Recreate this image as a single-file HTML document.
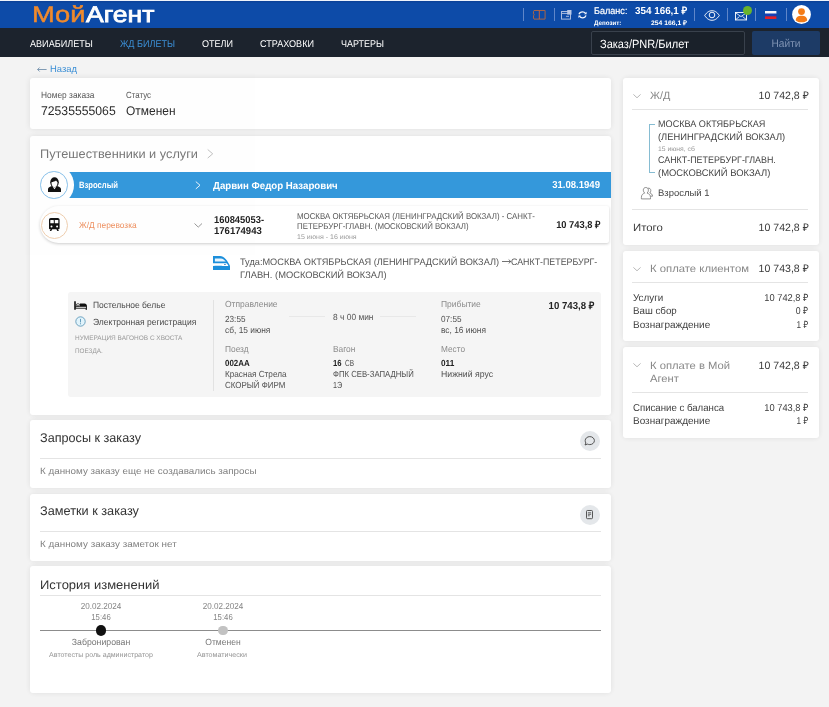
<!DOCTYPE html>
<html lang="ru">
<head>
<meta charset="utf-8">
<title>Мой Агент</title>
<style>
*{box-sizing:border-box;margin:0;padding:0}
html,body{width:829px;height:707px;overflow:hidden}
body{background:#f3f3f3;font-family:"Liberation Sans",sans-serif;color:#333;position:relative;font-size:10px}
.a{position:absolute;white-space:pre;line-height:1;text-rendering:geometricPrecision}
.card{position:absolute;background:#fff;border-radius:3px;box-shadow:0 0 6px rgba(0,0,0,.09)}
.hr{position:absolute;height:1px;background:#e4e4e4}
#top{position:absolute;left:0;top:0;width:829px;height:28.3px;background:#0d4ba8}
#top:before{content:"";position:absolute;left:0;top:0;width:100%;height:3px;background:linear-gradient(#eef3fb 0 1px,#0b429a 1px 2.300px,#0c47a0 2.300px)}
#nav{position:absolute;left:0;top:28.3px;width:829px;height:29.2px;background:#1c232d}
.sep{position:absolute;top:8px;width:1px;height:13px;background:#5f86c9}
.ic{position:absolute;overflow:visible}
#pg{position:absolute;left:0;top:0;width:829px;height:707px;will-change:opacity;opacity:.999}
</style>
</head>
<body>
<div id="pg">
<!-- ===== top bar ===== -->
<div id="top">
  <div class="sep" style="left:523px"></div>
  <svg class="ic" style="left:533px;top:10.400px" width="12.600" height="9.600" viewBox="0 0 12.600 9.600"><path d="M1 .500h11.100v8.600H1L.500 8V5.800l.700-1-.700-1V1.600z" fill="none" stroke="#c26a3a" stroke-width=".85"/><path d="M6.300.600v8.400" stroke="#e2622c" stroke-width=".9"/></svg>
  <div class="sep" style="left:553.5px"></div>
  <svg class="ic" style="left:561px;top:9.700px" width="11" height="10" viewBox="0 0 11 10"><rect x=".5" y="1.500" width="9" height="7.600" fill="none" stroke="#a9bbdf" stroke-width="1"/><path d="M.500 3.400h9" stroke="#a9bbdf" stroke-width="1"/><rect x="6.200" y="0" width="4.300" height="4.600" fill="#b9c8e6"/><path d="M5 6.300h3" stroke="#a9bbdf" stroke-width="1"/></svg>
  <svg class="ic" style="left:578.200px;top:10.800px" width="9" height="7.600" viewBox="0 0 9 7.600"><path d="M1 3.200C1.500 1.600 2.900.800 4.500.800c1.300 0 2.400.600 3.100 1.600M8 4.400C7.500 6 6.100 6.800 4.500 6.800c-1.300 0-2.400-.600-3.100-1.600" fill="none" stroke="#f2f6fd" stroke-width="1.250"/><path d="M8.600.700v2.500H6.100zM.400 6.900V4.400h2.500z" fill="#f2f6fd"/></svg>
  <div class="sep" style="left:694px"></div>
  <svg class="ic" style="left:703.5px;top:9.6px" width="16" height="11" viewBox="0 0 16 11"><path d="M.7 5.500C3 1.800 5.700.700 8 .700s5 1.100 7.300 4.800C13 9.200 10.300 10.300 8 10.300S3 9.200.700 5.500z" fill="none" stroke="#fff" stroke-width=".95"/><circle cx="8" cy="5" r="2.800" fill="none" stroke="#fff" stroke-width=".95"/></svg>
  <div class="sep" style="left:726.5px"></div>
  <svg class="ic" style="left:734.6px;top:11.8px" width="12" height="8.400" viewBox="0 0 12 8.400"><rect x=".45" y=".45" width="11.100" height="7.500" fill="none" stroke="#fff" stroke-width=".9"/><path d="M.500.700l5.500 3.900 5.500-3.900M.500 7.800l4-3.300M11.500 7.800l-4-3.300" fill="none" stroke="#fff" stroke-width=".8"/></svg>
  <div class="a" style="left:743.400px;top:5.700px;width:9px;height:9px;border-radius:50%;background:#69b32c"></div>
  <div class="sep" style="left:755px"></div>
  <svg class="ic" style="left:764.800px;top:10.500px" width="11.400" height="8" viewBox="0 0 11.400 8"><rect width="11.400" height="2.700" fill="#f6f6fa"/><rect y="2.700" width="11.400" height="2.650" fill="#1a3fb5"/><rect y="5.350" width="11.400" height="2.650" fill="#e0202a"/></svg>
  <div class="sep" style="left:786px"></div>
  <svg class="ic" style="left:792.300px;top:5px" width="19" height="19" viewBox="0 0 19 19"><circle cx="9.500" cy="9.500" r="9.400" fill="#fff"/><circle cx="9.500" cy="6.600" r="3.400" fill="#f47b16"/><path d="M3.800 15.400c0-3.300 2.500-4.600 5.700-4.600s5.700 1.300 5.700 4.600c-1.500 1.300-3.400 1.800-5.700 1.800s-4.200-.500-5.700-1.800z" fill="#f47b16"/></svg>
</div>
<div id="nav"></div>
<div class="a" style="left:591px;top:31px;width:154px;height:24px;background:#1a212a;border:1px solid #39414c;border-radius:2px"></div>
<div class="a" style="left:752.400px;top:31px;width:67.400px;height:23.600px;background:#1d3b66;border-radius:2px"></div>
<svg class="ic" style="left:37.200px;top:66.500px" width="10" height="5" viewBox="0 0 10 5"><path d="M.600 2.500h9M2.600.500L.600 2.500l2 2" fill="none" stroke="#7391ad" stroke-width=".9"/></svg>

<!-- ===== cards ===== -->
<div class="card" style="left:29.700px;top:78px;width:581.600px;height:51.400px"></div>
<div class="card" style="left:29.700px;top:135.500px;width:581.600px;height:279px"></div>
<div class="card" style="left:29.700px;top:420px;width:581.600px;height:68px"></div>
<div class="card" style="left:29.700px;top:493.800px;width:581.600px;height:67.300px"></div>
<div class="card" style="left:29.700px;top:566.300px;width:581.600px;height:126.400px"></div>
<div class="card" style="left:622.600px;top:77.600px;width:196.200px;height:167.500px"></div>
<div class="card" style="left:622.600px;top:251.200px;width:196.200px;height:90px"></div>
<div class="card" style="left:622.600px;top:347.200px;width:196.200px;height:91px"></div>

<!-- ===== card 2: travellers ===== -->
<svg class="ic" style="left:207.300px;top:148.600px" width="6.400" height="9.600" viewBox="0 0 6.400 9.600"><path d="M.700.500l5 4.300-5 4.300" fill="none" stroke="#b8b8b8" stroke-width=".9"/></svg>
<!-- blue passenger bar -->
<div class="a" style="left:54px;top:171.500px;width:557.300px;height:26.800px;background:#3498db"></div>
<div class="a" style="left:34.100px;top:165.100px;width:39.500px;height:39.500px;border-radius:50%;background:#fff"></div>
<div class="a" style="left:40.100px;top:171.100px;width:27.500px;height:27.500px;border-radius:50%;background:#fff;border:1px solid #86bfe9"></div>
<svg class="ic" style="left:47.600px;top:177.400px" width="13" height="15" viewBox="0 0 13 15"><path d="M0 15v-2.800c0-1.800 1.900-2.500 4.100-3.200l2.400 3.200L8.900 9c2.200.700 4.100 1.400 4.100 3.200V15z" fill="#111"/><ellipse cx="6.500" cy="5.300" rx="4.300" ry="5.100" fill="#111"/><path d="M3.500 5.200c1.500-.300 3.500-.700 4.500-1.700.600.800 1.100 1.400 1.500 1.700.100 2.600-1.200 5-3 5s-3.100-2.400-3-5z" fill="#fff"/></svg>
<svg class="ic" style="left:194.800px;top:181px" width="6" height="8.500" viewBox="0 0 6 8.500"><path d="M.800.600l4.200 3.650L.800 7.900" fill="none" stroke="#e8f3fc" stroke-width="1"/></svg>
<!-- service row -->
<div class="a" style="left:30px;top:199px;width:581.600px;height:52px;overflow:hidden"><div class="a" style="left:9.900px;top:7.400px;width:568.800px;height:37px;border-radius:18.500px 2px 2px 18.500px;background:#fff;box-shadow:0 1px 3px rgba(0,0,0,.2)"></div></div>
<div class="a" style="left:40.500px;top:212px;width:27.200px;height:27.200px;border-radius:50%;background:#fff;border:1px solid #eecdae"></div>
<svg class="ic" style="left:49.100px;top:218.400px" width="10.600" height="13" viewBox="0 0 10.600 13"><path d="M1.800 0h7c1 0 1.800.800 1.800 1.800v8.400c0 .600-.500 1.100-1.100 1.100h-.500l.900 1.700H8.300l-.900-1.700H3.200l-.900 1.700H.700l.900-1.700h-.500C.500 11.300 0 10.800 0 10.200V1.800C0 .800.800 0 1.800 0z" fill="#111"/><rect x="1.300" y="2" width="3.500" height="3.300" rx=".4" fill="#fff"/><rect x="5.800" y="2" width="3.500" height="3.300" rx=".4" fill="#fff"/><circle cx="2.500" cy="8.400" r="1" fill="#fff"/><circle cx="8.100" cy="8.400" r="1" fill="#fff"/></svg>
<svg class="ic" style="left:193.800px;top:222.600px" width="8.500" height="5" viewBox="0 0 8.500 5"><path d="M.500.500l3.750 3.600L8 .500" fill="none" stroke="#8a8a8a" stroke-width=".9"/></svg>
<!-- blue train icon -->
<svg class="ic" style="left:213px;top:255.800px" width="17" height="14" viewBox="0 0 17 14"><path d="M0 0h7c4 0 7.600 5 10 9.800V14H0z" fill="#1c8fdb"/><path d="M1.900 2.600H8c1.800.200 3.600 1.600 4.800 3H1.900z" fill="#eaf5fd"/><path d="M0 7.200h13.600c.800.800 1.400 1.800 1.800 2.800H9.500C8 9.600 6 9.900 0 9.900z" fill="#fff"/><rect x="11.200" y="8" width="1.500" height=".9" fill="#1c6fb8"/></svg>
<svg class="ic" style="left:501.500px;top:259px" width="9.500" height="5" viewBox="0 0 9.500 5"><path d="M0 2.500h8.800M6.700.600l2.100 1.900-2.100 1.900" fill="none" stroke="#5a5a5a" stroke-width=".85"/></svg>
<!-- grey detail box -->
<div class="a" style="left:68.400px;top:292.200px;width:532.400px;height:105px;border-radius:3px;background:#f5f5f5"></div>
<svg class="ic" style="left:74.200px;top:301.200px" width="13" height="8.800" viewBox="0 0 13 8.800"><path d="M.200 8.800V1c0-.600.400-1 .800-1s.800.400.800 1v7.800z" fill="#111"/><rect x="1.700" y="5.300" width="10.800" height="1.900" fill="#fff" stroke="#111" stroke-width=".9"/><path d="M6 5.300V2.400h4.600c1.300 0 2.300 1 2.300 2.300v.600z" fill="#111"/><rect x="2.500" y="2.800" width="3" height="2" rx=".9" fill="#fff" stroke="#111" stroke-width=".8"/><rect x="11.600" y="7.200" width="1.350" height="1.600" fill="#111"/></svg>
<svg class="ic" style="left:75px;top:315.700px" width="11" height="11" viewBox="0 0 11 11"><circle cx="5.500" cy="5.500" r="4.700" fill="#e1f3fb" stroke="#4788ad" stroke-width=".75"/><path d="M5.500 2.900v3.500" stroke="#4788ad" stroke-width=".8"/><circle cx="5.500" cy="7.800" r=".55" fill="#4788ad"/></svg>
<div class="a" style="left:213px;top:299.500px;width:1px;height:91.500px;background:#e2e2e2"></div>
<div class="a" style="left:288.600px;top:316px;width:36.200px;height:1px;background:#e8e8e8"></div>
<div class="a" style="left:380.300px;top:316px;width:36.200px;height:1px;background:#e8e8e8"></div>

<!-- ===== cards 3/4 ===== -->
<div class="a" style="left:579.800px;top:431.100px;width:20px;height:20px;border-radius:50%;background:#e4e7ea"></div>
<svg class="ic" style="left:584.300px;top:436px" width="11" height="10.500" viewBox="0 0 11 10.500"><path d="M5.800.600c2.600 0 4.600 1.800 4.600 4s-2 4-4.600 4c-.900 0-1.700-.200-2.400-.500L1 9l.900-2C1.400 6.300 1.200 5.500 1.200 4.600c0-2.200 2-4 4.600-4z" fill="none" stroke="#444" stroke-width=".9"/></svg>
<div class="hr" style="left:39.800px;top:458px;width:561px"></div>
<div class="a" style="left:579.800px;top:505px;width:20px;height:20px;border-radius:50%;background:#e4e7ea"></div>
<svg class="ic" style="left:586.300px;top:510.400px" width="7" height="9.200" viewBox="0 0 7 9.200"><rect x=".5" y=".5" width="6" height="8.200" rx=".9" fill="none" stroke="#444" stroke-width=".9"/><path d="M1.900 2.800h3.200M1.900 4.300h3.200M1.900 5.800h1.800" stroke="#444" stroke-width=".8"/></svg>
<div class="hr" style="left:39.800px;top:531px;width:561px"></div>

<!-- ===== card 5: history ===== -->
<div class="hr" style="left:39.800px;top:595px;width:561px"></div>
<div class="a" style="left:39.800px;top:629.800px;width:561px;height:1px;background:#8c8c8c"></div>
<div class="a" style="left:95.900px;top:625px;width:10.600px;height:10.600px;border-radius:50%;background:#111"></div>
<div class="a" style="left:218.400px;top:625.700px;width:9.200px;height:9.200px;border-radius:50%;background:#c2c2c2"></div>

<!-- ===== right card 1 ===== -->
<svg class="ic" style="left:633px;top:93.800px" width="8" height="4.600" viewBox="0 0 8 4.600"><path d="M.400.400L4 3.800 7.600.400" fill="none" stroke="#b0b0b0" stroke-width=".9"/></svg>
<div class="hr" style="left:632px;top:109.200px;width:176.400px"></div>
<div class="a" style="left:648.600px;top:124px;width:6px;height:49px;border:1px solid #86bcd2;border-right:0"></div>
<svg class="ic" style="left:641.300px;top:186.600px" width="12" height="12.500" viewBox="0 0 12 12.500"><path d="M6.800 1.300c1.700-.600 3 .600 3 2.200 0 1-.400 1.900-1 2.500 1.600.600 2.700 1.400 2.700 3.200H9.600" fill="none" stroke="#777" stroke-width=".8"/><path d="M4.800.500c1.600 0 2.600 1.100 2.600 2.700 0 1.100-.500 2.200-1.300 2.900 2 .700 3.400 1.800 3.400 4.300v1.500H.400v-1.500c0-2.500 1.300-3.600 3.300-4.300-.800-.700-1.400-1.800-1.400-2.900C2.300 1.600 3.200.500 4.800.500z" fill="#fff" stroke="#777" stroke-width=".8"/></svg>
<div class="hr" style="left:632px;top:209.300px;width:176.400px"></div>

<!-- ===== right card 2 ===== -->
<svg class="ic" style="left:633px;top:266.800px" width="8" height="4.600" viewBox="0 0 8 4.600"><path d="M.400.400L4 3.800 7.600.400" fill="none" stroke="#b0b0b0" stroke-width=".9"/></svg>
<div class="hr" style="left:632px;top:282.200px;width:176.400px"></div>

<!-- ===== right card 3 ===== -->
<svg class="ic" style="left:633px;top:363px" width="8" height="4.600" viewBox="0 0 8 4.600"><path d="M.400.400L4 3.800 7.600.400" fill="none" stroke="#b0b0b0" stroke-width=".9"/></svg>
<div class="hr" style="left:632px;top:392px;width:176.400px"></div>

<!-- texts -->
<div class="a" style="top:4px;font-size:22.6px;color:#f08a2c;-webkit-text-stroke:.45px #f08a2c;left:31.80px;transform-origin:0 50%;transform:scaleX(1.2086)">Мой</div>
<div class="a" style="top:4px;font-size:22.6px;color:#fff;-webkit-text-stroke:.8px #fff;left:85.80px;transform-origin:0 50%;transform:scaleX(1.1749)">Агент</div>
<div class="a" style="top:40px;font-size:9.8px;color:#fff;left:29.80px;transform-origin:0 50%;transform:scaleX(0.9269)">АВИАБИЛЕТЫ</div>
<div class="a" style="top:40px;font-size:9.8px;color:#3b8fd6;left:120.00px;transform-origin:0 50%;transform:scaleX(0.9244)">ЖД БИЛЕТЫ</div>
<div class="a" style="top:40px;font-size:9.8px;color:#fff;left:202.00px;transform-origin:0 50%;transform:scaleX(0.9219)">ОТЕЛИ</div>
<div class="a" style="top:40px;font-size:9.8px;color:#fff;left:260.00px;transform-origin:0 50%;transform:scaleX(0.9268)">СТРАХОВКИ</div>
<div class="a" style="top:40px;font-size:9.8px;color:#fff;left:341.00px;transform-origin:0 50%;transform:scaleX(0.9170)">ЧАРТЕРЫ</div>
<div class="a" style="top:7px;font-size:9.7px;color:#fff;-webkit-text-stroke:.2px #fff;left:593.60px;transform-origin:0 50%;transform:scaleX(0.9363)">Баланс:</div>
<div class="a" style="top:7px;font-size:10.1px;color:#fff;font-weight:bold;left:634.70px;transform-origin:0 50%;transform:scaleX(0.9759)">354 166,1 ₽</div>
<div class="a" style="top:21px;font-size:6.4px;color:#fff;font-weight:bold;left:593.60px;transform-origin:0 50%;transform:scaleX(0.9704)">Депозит:</div>
<div class="a" style="top:21px;font-size:6.4px;color:#fff;font-weight:bold;left:651.00px;transform-origin:0 50%;transform:scaleX(1.0608)">254 166,1 ₽</div>
<div class="a" style="top:38px;font-size:12px;color:#fff;left:600.00px;transform-origin:0 50%;transform:scaleX(0.9190)">Заказ/PNR/Билет</div>
<div class="a" style="top:39px;font-size:11px;color:#7f93b3;left:785.90px;transform:translateX(-50%) scaleX(0.9238)">Найти</div>
<div class="a" style="top:64px;font-size:9.4px;color:#3b8fd6;left:49.60px;transform-origin:0 50%;transform:scaleX(1.0047)">Назад</div>
<div class="a" style="top:91px;font-size:9px;color:#555;left:40.50px;transform-origin:0 50%;transform:scaleX(0.9302)">Номер заказа</div>
<div class="a" style="top:105px;font-size:12.6px;color:#2b2b2b;left:40.50px;transform-origin:0 50%;transform:scaleX(0.9695)">72535555065</div>
<div class="a" style="top:91px;font-size:9px;color:#555;left:126.20px;transform-origin:0 50%;transform:scaleX(0.8786)">Статус</div>
<div class="a" style="top:105px;font-size:12.6px;color:#2b2b2b;left:126.20px;transform-origin:0 50%;transform:scaleX(0.9494)">Отменен</div>
<div class="a" style="top:148px;font-size:12.5px;color:#777;left:40.40px;transform-origin:0 50%;transform:scaleX(1.0207)">Путешественники и услуги</div>
<div class="a" style="top:181px;font-size:9.2px;color:#fff;font-weight:bold;left:79.00px;transform-origin:0 50%;transform:scaleX(0.8342)">Взрослый</div>
<div class="a" style="top:182px;font-size:10.2px;color:#fff;font-weight:bold;left:213.30px;transform-origin:0 50%;transform:scaleX(0.9491)">Дарвин Федор Назарович</div>
<div class="a" style="top:181px;font-size:10.2px;color:#fff;font-weight:bold;right:228.60px;transform-origin:100% 50%;transform:scaleX(0.9373)">31.08.1949</div>
<div class="a" style="top:221px;font-size:8.6px;color:#ee9060;left:78.60px;transform-origin:0 50%;transform:scaleX(0.9706)">Ж/Д перевозка</div>
<div class="a" style="top:216px;font-size:10px;color:#222;font-weight:bold;left:213.80px;transform-origin:0 50%;transform:scaleX(0.9365)">160845053-</div>
<div class="a" style="top:227px;font-size:10px;color:#222;font-weight:bold;left:213.80px;transform-origin:0 50%;transform:scaleX(0.9548)">176174943</div>
<div class="a" style="top:212px;font-size:8.5px;color:#555;left:296.90px;transform-origin:0 50%;transform:scaleX(0.9264)">МОСКВА ОКТЯБРЬСКАЯ (ЛЕНИНГРАДСКИЙ ВОКЗАЛ) - САНКТ-</div>
<div class="a" style="top:222px;font-size:8.5px;color:#555;left:296.90px;transform-origin:0 50%;transform:scaleX(0.9248)">ПЕТЕРБУРГ-ГЛАВН. (МОСКОВСКИЙ ВОКЗАЛ)</div>
<div class="a" style="top:235px;font-size:6.8px;color:#999;left:296.90px;transform-origin:0 50%;transform:scaleX(1.0363)">15 июня - 16 июня</div>
<div class="a" style="top:221px;font-size:10px;color:#222;font-weight:bold;right:228.60px;transform-origin:100% 50%;transform:scaleX(0.9341)">10 743,8 ₽</div>
<div class="a" style="top:257px;font-size:9.4px;color:#555;left:239.80px;transform-origin:0 50%;transform:scaleX(0.9815)">Туда:МОСКВА ОКТЯБРЬСКАЯ (ЛЕНИНГРАДСКИЙ ВОКЗАЛ)</div>
<div class="a" style="top:257px;font-size:9.4px;color:#555;left:511.00px;transform-origin:0 50%;transform:scaleX(0.9435)">САНКТ-ПЕТЕРБУРГ-</div>
<div class="a" style="top:270px;font-size:9.4px;color:#555;left:239.80px;transform-origin:0 50%;transform:scaleX(0.9961)">ГЛАВН. (МОСКОВСКИЙ ВОКЗАЛ)</div>
<div class="a" style="top:301px;font-size:9px;color:#4a4a4a;left:93.00px;transform-origin:0 50%;transform:scaleX(0.9422)">Постельное белье</div>
<div class="a" style="top:318px;font-size:9px;color:#4a4a4a;left:93.00px;transform-origin:0 50%;transform:scaleX(0.9483)">Электронная регистрация</div>
<div class="a" style="top:336px;font-size:6.6px;color:#999;left:74.50px;transform-origin:0 50%;transform:scaleX(0.9800)">НУМЕРАЦИЯ ВАГОНОВ С ХВОСТА</div>
<div class="a" style="top:349px;font-size:6.6px;color:#999;left:74.50px;transform-origin:0 50%;transform:scaleX(0.9614)">ПОЕЗДА.</div>
<div class="a" style="top:300px;font-size:8.8px;color:#8c8c8c;left:224.65px;transform-origin:0 50%;transform:scaleX(0.9635)">Отправление</div>
<div class="a" style="top:315px;font-size:8.8px;color:#505050;left:224.65px;transform-origin:0 50%;transform:scaleX(0.9312)">23:55</div>
<div class="a" style="top:326px;font-size:8.8px;color:#505050;left:224.65px;transform-origin:0 50%;transform:scaleX(0.9520)">сб, 15 июня</div>
<div class="a" style="top:345px;font-size:8.8px;color:#8c8c8c;left:224.65px;transform-origin:0 50%;transform:scaleX(0.9481)">Поезд</div>
<div class="a" style="top:359px;font-size:8.8px;color:#222;font-weight:bold;left:224.65px;transform-origin:0 50%;transform:scaleX(0.8981)">002АА</div>
<div class="a" style="top:370px;font-size:8.8px;color:#505050;left:224.65px;transform-origin:0 50%;transform:scaleX(0.9294)">Красная Стрела</div>
<div class="a" style="top:381px;font-size:8.8px;color:#505050;left:224.65px;transform-origin:0 50%;transform:scaleX(0.9034)">СКОРЫЙ ФИРМ</div>
<div class="a" style="top:313px;font-size:8.8px;color:#555;left:332.50px;transform-origin:0 50%;transform:scaleX(0.9547)">8 ч 00 мин</div>
<div class="a" style="top:345px;font-size:8.8px;color:#8c8c8c;left:332.50px;transform-origin:0 50%;transform:scaleX(0.9519)">Вагон</div>
<div class="a" style="top:359px;font-size:8.8px;color:#222;font-weight:bold;left:332.50px;transform-origin:0 50%;transform:scaleX(0.8778)">16</div>
<div class="a" style="top:359px;font-size:8.8px;color:#505050;left:345.30px;transform-origin:0 50%;transform:scaleX(0.7356)">СВ</div>
<div class="a" style="top:370px;font-size:8.8px;color:#505050;left:332.50px;transform-origin:0 50%;transform:scaleX(0.8822)">ФПК СЕВ-ЗАПАДНЫЙ</div>
<div class="a" style="top:381px;font-size:8.8px;color:#505050;left:332.50px;transform-origin:0 50%;transform:scaleX(0.8201)">1Э</div>
<div class="a" style="top:300px;font-size:8.8px;color:#8c8c8c;left:440.80px;transform-origin:0 50%;transform:scaleX(0.9630)">Прибытие</div>
<div class="a" style="top:315px;font-size:8.8px;color:#505050;left:440.80px;transform-origin:0 50%;transform:scaleX(0.9312)">07:55</div>
<div class="a" style="top:326px;font-size:8.8px;color:#505050;left:440.80px;transform-origin:0 50%;transform:scaleX(0.9527)">вс, 16 июня</div>
<div class="a" style="top:345px;font-size:8.8px;color:#8c8c8c;left:440.80px;transform-origin:0 50%;transform:scaleX(0.9394)">Место</div>
<div class="a" style="top:359px;font-size:8.8px;color:#222;font-weight:bold;left:440.80px;transform-origin:0 50%;transform:scaleX(0.9364)">011</div>
<div class="a" style="top:370px;font-size:8.8px;color:#505050;left:440.80px;transform-origin:0 50%;transform:scaleX(0.9896)">Нижний ярус</div>
<div class="a" style="top:302px;font-size:10.2px;color:#222;font-weight:bold;right:234.30px;transform-origin:100% 50%;transform:scaleX(0.9459)">10 743,8 ₽</div>
<div class="a" style="top:432px;font-size:12.6px;color:#333;left:40.10px;transform-origin:0 50%;transform:scaleX(1.0034)">Запросы к заказу</div>
<div class="a" style="top:467px;font-size:9px;color:#808080;left:40.40px;transform-origin:0 50%;transform:scaleX(1.0931)">К данному заказу еще не создавались запросы</div>
<div class="a" style="top:505px;font-size:12.6px;color:#333;left:40.10px;transform-origin:0 50%;transform:scaleX(1.0097)">Заметки к заказу</div>
<div class="a" style="top:540px;font-size:9px;color:#808080;left:40.40px;transform-origin:0 50%;transform:scaleX(1.0959)">К данному заказу заметок нет</div>
<div class="a" style="top:579px;font-size:12.5px;color:#333;left:40.10px;transform-origin:0 50%;transform:scaleX(1.0388)">История изменений</div>
<div class="a" style="top:602px;font-size:8.7px;color:#858585;left:101.20px;transform:translateX(-50%) scaleX(0.9337)">20.02.2024</div>
<div class="a" style="top:613px;font-size:8.7px;color:#858585;left:101.20px;transform:translateX(-50%) scaleX(0.8920)">15:46</div>
<div class="a" style="top:638px;font-size:9px;color:#777;left:101.20px;transform:translateX(-50%) scaleX(0.9688)">Забронирован</div>
<div class="a" style="top:652px;font-size:7px;color:#939393;left:101.20px;transform:translateX(-50%) scaleX(1.0093)">Автотесты роль администратор</div>
<div class="a" style="top:602px;font-size:8.7px;color:#858585;left:222.80px;transform:translateX(-50%) scaleX(0.9337)">20.02.2024</div>
<div class="a" style="top:613px;font-size:8.7px;color:#858585;left:222.80px;transform:translateX(-50%) scaleX(0.8920)">15:46</div>
<div class="a" style="top:638px;font-size:9px;color:#777;left:222.80px;transform:translateX(-50%) scaleX(0.9499)">Отменен</div>
<div class="a" style="top:652px;font-size:7px;color:#939393;left:222.40px;transform:translateX(-50%) scaleX(1.0217)">Автоматически</div>
<div class="a" style="top:91px;font-size:10.6px;color:#888;left:649.60px;transform-origin:0 50%;transform:scaleX(1.0198)">Ж/Д</div>
<div class="a" style="top:91px;font-size:10.7px;color:#3a3a3a;right:20.20px;transform-origin:100% 50%;transform:scaleX(0.9882)">10 742,8 ₽</div>
<div class="a" style="top:120px;font-size:9.6px;color:#444;left:657.80px;transform-origin:0 50%;transform:scaleX(0.9473)">МОСКВА ОКТЯБРЬСКАЯ</div>
<div class="a" style="top:133px;font-size:9.6px;color:#444;left:657.80px;transform-origin:0 50%;transform:scaleX(0.9732)">(ЛЕНИНГРАДСКИЙ ВОКЗАЛ)</div>
<div class="a" style="top:147px;font-size:6.5px;color:#999;left:657.80px;transform-origin:0 50%;transform:scaleX(1.0468)">15 июня, сб</div>
<div class="a" style="top:156px;font-size:9.6px;color:#444;left:657.80px;transform-origin:0 50%;transform:scaleX(0.9279)">САНКТ-ПЕТЕРБУРГ-ГЛАВН.</div>
<div class="a" style="top:169px;font-size:9.6px;color:#444;left:657.80px;transform-origin:0 50%;transform:scaleX(0.9817)">(МОСКОВСКИЙ ВОКЗАЛ)</div>
<div class="a" style="top:188px;font-size:9.4px;color:#444;left:657.70px;transform-origin:0 50%;transform:scaleX(1.0091)">Взрослый 1</div>
<div class="a" style="top:224px;font-size:10.4px;color:#3a3a3a;left:633.00px;transform-origin:0 50%;transform:scaleX(1.0942)">Итого</div>
<div class="a" style="top:223px;font-size:10.7px;color:#3a3a3a;right:20.20px;transform-origin:100% 50%;transform:scaleX(0.9882)">10 742,8 ₽</div>
<div class="a" style="top:265px;font-size:10.4px;color:#888;left:650.10px;transform-origin:0 50%;transform:scaleX(1.0892)">К оплате клиентом</div>
<div class="a" style="top:264px;font-size:10.7px;color:#3a3a3a;right:20.70px;transform-origin:100% 50%;transform:scaleX(0.9882)">10 743,8 ₽</div>
<div class="a" style="top:294px;font-size:10px;color:#404040;left:633.20px;transform-origin:0 50%;transform:scaleX(0.9849)">Услуги</div>
<div class="a" style="top:294px;font-size:10px;color:#404040;right:20.60px;transform-origin:100% 50%;transform:scaleX(0.9299)">10 742,8 ₽</div>
<div class="a" style="top:307px;font-size:10px;color:#404040;left:633.20px;transform-origin:0 50%;transform:scaleX(0.9757)">Ваш сбор</div>
<div class="a" style="top:307px;font-size:10px;color:#404040;right:20.60px;transform-origin:100% 50%;transform:scaleX(0.8679)">0 ₽</div>
<div class="a" style="top:321px;font-size:10px;color:#404040;left:633.20px;transform-origin:0 50%;transform:scaleX(0.9983)">Вознаграждение</div>
<div class="a" style="top:321px;font-size:10px;color:#404040;right:20.60px;transform-origin:100% 50%;transform:scaleX(0.8185)">1 ₽</div>
<div class="a" style="top:362px;font-size:10.4px;color:#888;left:650.10px;transform-origin:0 50%;transform:scaleX(1.0820)">К оплате в Мой</div>
<div class="a" style="top:375px;font-size:10.4px;color:#888;left:650.10px;transform-origin:0 50%;transform:scaleX(1.0791)">Агент</div>
<div class="a" style="top:361px;font-size:10.7px;color:#3a3a3a;right:20.70px;transform-origin:100% 50%;transform:scaleX(0.9882)">10 742,8 ₽</div>
<div class="a" style="top:404px;font-size:10px;color:#404040;left:633.20px;transform-origin:0 50%;transform:scaleX(0.9634)">Списание с баланса</div>
<div class="a" style="top:404px;font-size:10px;color:#404040;right:20.60px;transform-origin:100% 50%;transform:scaleX(0.9299)">10 743,8 ₽</div>
<div class="a" style="top:417px;font-size:10px;color:#404040;left:633.20px;transform-origin:0 50%;transform:scaleX(0.9983)">Вознаграждение</div>
<div class="a" style="top:417px;font-size:10px;color:#404040;right:20.60px;transform-origin:100% 50%;transform:scaleX(0.8185)">1 ₽</div>
</div>
</body>
</html>
